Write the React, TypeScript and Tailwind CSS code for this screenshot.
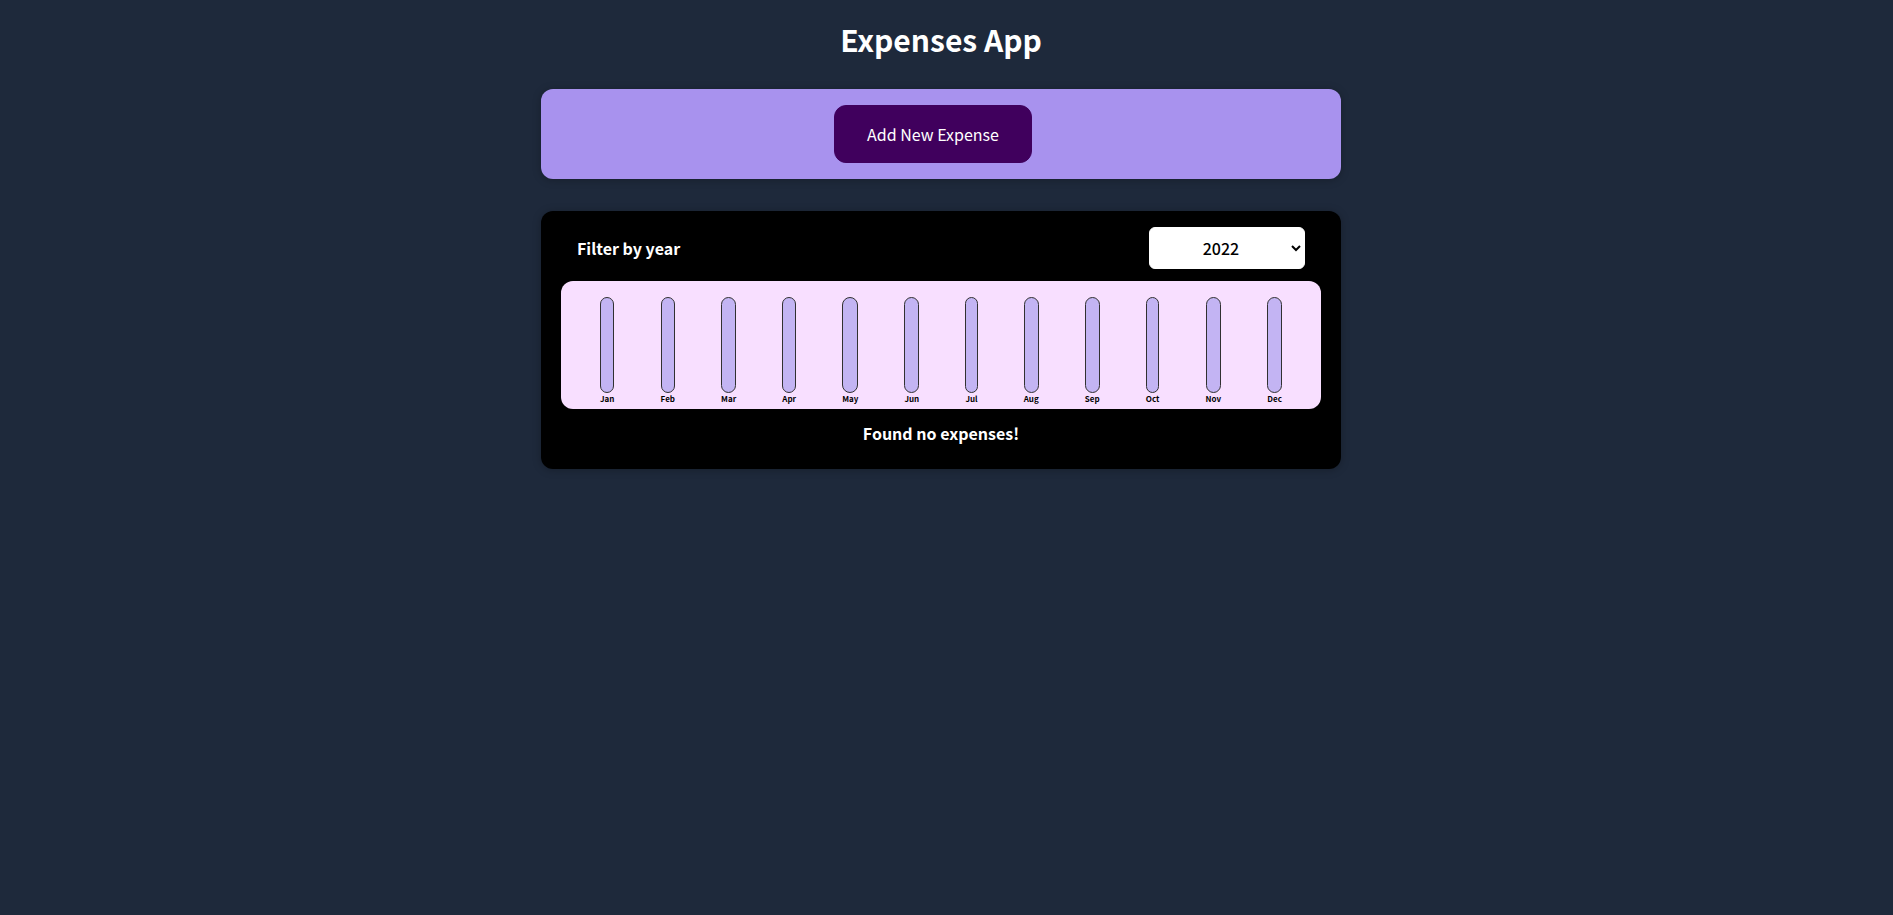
import { useState } from "react";

const MONTHS = ["Jan", "Feb", "Mar", "Apr", "May", "Jun", "Jul", "Aug", "Sep", "Oct", "Nov", "Dec"];
const YEARS = ["2022", "2021", "2020", "2019"];

function NewExpense() {
  return (
    <section className="flex justify-center rounded-xl bg-[#a892ee] p-4 shadow-[0_1px_8px_rgba(0,0,0,0.25)]">
      <button
        type="button"
        className="mr-4 cursor-pointer rounded-xl border border-[#40005d] bg-[#40005d] px-8 py-4 text-base leading-6 text-white"
      >
        Add New Expense
      </button>
    </section>
  );
}

function ExpensesFilter({ year, onChange }: { year: string; onChange: (year: string) => void }) {
  return (
    <div className="flex items-center justify-between px-4 text-white">
      <label htmlFor="year" className="text-base font-bold">
        Filter by year
      </label>
      <select
        id="year"
        value={year}
        onChange={(event) => onChange(event.target.value)}
        className="h-[42px] w-[156px] rounded-md border border-white bg-white text-center text-base font-medium text-black"
      >
        {YEARS.map((value) => (
          <option key={value} value={value}>
            {value}
          </option>
        ))}
      </select>
    </div>
  );
}

function ExpensesChart() {
  return (
    <div className="mt-3 flex h-32 justify-around rounded-xl bg-[#f8dfff] px-4 pt-4">
      {MONTHS.map((month) => (
        <div key={month} className="flex flex-col">
          <div className="h-24 rounded-xl border border-[#313131] bg-[#c3b4f3]" />
          <div className="text-center text-[8px] leading-3 font-bold text-black">{month}</div>
        </div>
      ))}
    </div>
  );
}

export default function App() {
  const [year, setYear] = useState("2022");

  return (
    <div className="min-h-screen bg-[#1e293b] pt-4 pr-[27px] pb-8 pl-4 font-['Noto_Sans_CJK_JP',sans-serif]">
      <main className="mx-auto max-w-[800px]">
        <h1 className="mb-6 pb-[2px] text-center text-3xl leading-[47px] font-bold text-white">Expenses App</h1>
        <NewExpense />
        <section className="mt-8 rounded-xl bg-black px-5 py-4 shadow-[0_1px_8px_rgba(0,0,0,0.25)]">
          <ExpensesFilter year={year} onChange={setYear} />
          <ExpensesChart />
          <h2 className="pt-3 pb-2 text-center text-base leading-6 font-bold text-white">
            Found no expenses!
          </h2>
        </section>
      </main>
    </div>
  );
}
